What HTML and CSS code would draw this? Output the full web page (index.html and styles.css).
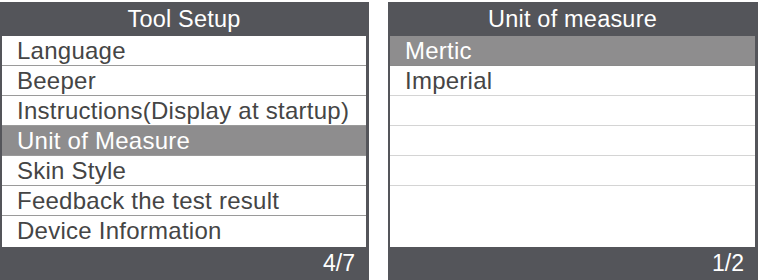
FILE: index.html
```html
<!DOCTYPE html>
<html>
<head>
<meta charset="utf-8">
<link rel="stylesheet" href="styles.css">
</head>
<body>
<div class="screens">
  <div class="panel panel-left">
    <div class="header">Tool Setup</div>
    <ul class="list list-dark">
      <li class="row">Language</li>
      <li class="row">Beeper</li>
      <li class="row">Instructions(Display at startup)</li>
      <li class="row selected">Unit of Measure</li>
      <li class="row">Skin Style</li>
      <li class="row">Feedback the test result</li>
      <li class="row last">Device Information</li>
    </ul>
    <div class="footer">4/7</div>
  </div>
  <div class="panel panel-right">
    <div class="header">Unit of measure</div>
    <ul class="list list-light">
      <li class="row selected">Mertic</li>
      <li class="row">Imperial</li>
      <li class="row"></li>
      <li class="row"></li>
      <li class="row"></li>
    </ul>
    <div class="footer">1/2</div>
  </div>
</div>
</body>
</html>
```
FILE: styles.css
```css
html, body {
  margin: 0;
  padding: 0;
  background: #ffffff;
}
body {
  font-family: "Liberation Sans", Arial, sans-serif;
  width: 760px;
  height: 280px;
  overflow: hidden;
}
.screens {
  display: flex;
  gap: 19px;
  padding-top: 2px;
}
.panel {
  display: flex;
  flex-direction: column;
  height: 278px;
  background: #54555a;
  padding: 0 3px 0 2px;
  box-sizing: border-box;
}
.panel-left { width: 369px; }
.panel-right { width: 370px; }
.header {
  height: 34px;
  color: #ffffff;
  font-size: 23.5px;
  letter-spacing: 0.2px;
  text-align: center;
  line-height: 34px;
}
.list {
  list-style: none;
  margin: 0;
  padding: 0;
  flex: 1;
  background: #ffffff;
}
.row {
  height: 30px;
  box-sizing: border-box;
  border-bottom: 1px solid #9a9a9a;
  padding-left: 15px;
  font-size: 24px;
  letter-spacing: 0.25px;
  line-height: 30px;
  color: #454545;
  white-space: nowrap;
}
.list-light .row { border-bottom-color: #d4d4d4; }
.list-light .row.selected { border-bottom-color: #8a8a8a; }
.row.last { border-bottom: none; }
.row.selected {
  background: #8e8d8e;
  color: #ffffff;
}
.footer {
  height: 33px;
  color: #ffffff;
  font-size: 23px;
  line-height: 33px;
  text-align: right;
  padding-right: 11px;
}
```
